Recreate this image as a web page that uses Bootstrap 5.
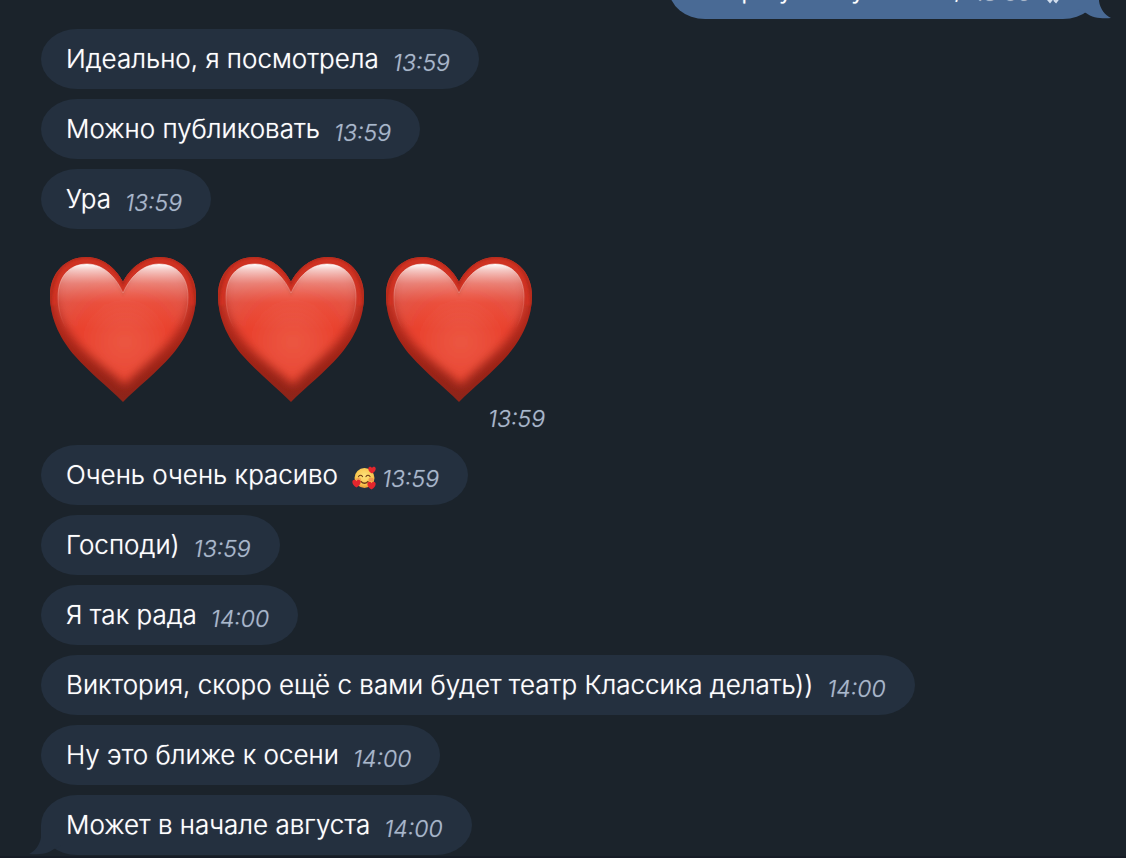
<!DOCTYPE html>
<html lang="ru">
<head>
<meta charset="utf-8">
<meta name="viewport" content="width=device-width, initial-scale=1">
<title>Чат</title>
<link href="https://cdn.jsdelivr.net/npm/bootstrap@5.3.0/dist/css/bootstrap.min.css" rel="stylesheet">
<style>
  :root { --chat-bg: #1b232b; --bubble-in: #24303f; --bubble-out: #496a95; --time: #a9b8cc; }
  body { background: var(--chat-bg); color: #fff; font-family: Inter, "Liberation Sans", sans-serif; }
  .chat { padding: 0 27px 1px 41px; border-bottom: 2px solid #161c26; }
  .feed { gap: 10px; }
  .bubble { height: 60px; padding: 0 29px 0 25px; gap: 14px; border-radius: 36px / 30px; background: var(--bubble-in); font-size: 26px; font-weight: 300; line-height: 60px; white-space: nowrap; text-shadow: 0 0 1px #ffffff99; }
  .bubble.out { padding-right: 33px; background: var(--bubble-out); }
  .stamp { color: var(--time); font-size: 23px; font-weight: 300; line-height: 32px; font-style: italic; text-shadow: 0 0 1px #a9b8cc99; }
  .bubble .stamp { padding-top: 7px; }
  .tail { position: absolute; bottom: 0; width: 34px; height: 30px; }
  .tail-in { left: -12px; fill: var(--bubble-in); }
  .tail-out { right: -12px; fill: var(--bubble-out); transform: scaleX(-1); }
  .hearts { padding: 18px 0 0 9px; }
  .heart-row { gap: 22px; padding-right: 13px; }
  .heart { width: 146px; height: 146px; }
  .face { width: 24px; height: 24px; margin-right: -8px; margin-top: 5px; }
  .ticks { width: 22px; height: 16px; margin-left: -2px; margin-top: 14px; fill: none; stroke: #d3dfee; stroke-width: 2; }
</style>
</head>
<body>
<svg width="0" height="0" class="position-absolute" aria-hidden="true">
  <defs>
    <symbol id="tail" viewBox="0 0 34 30"><path d="M12 0V12C11 20 6 26 0 29C8 30 19 29 25 24L34 20V0Z"/></symbol>
    <linearGradient id="rim" x1="0" y1="0" x2="0" y2="1">
      <stop offset="0" stop-color="#d03423"/><stop offset=".4" stop-color="#b0271a"/><stop offset=".75" stop-color="#9c2317"/><stop offset="1" stop-color="#8c2419"/>
    </linearGradient>
    <radialGradient id="core" gradientUnits="userSpaceOnUse" cx="75" cy="85" r="75">
      <stop offset="0" stop-color="#eb5641"/><stop offset=".35" stop-color="#ea4d39"/><stop offset=".6" stop-color="#ea412d"/><stop offset="1" stop-color="#e0493a"/>
    </radialGradient>
    <linearGradient id="shine" gradientUnits="userSpaceOnUse" x1="0" y1="7" x2="0" y2="72">
      <stop offset="0" stop-color="#fff"/><stop offset=".09" stop-color="#fff" stop-opacity=".72"/><stop offset=".3" stop-color="#f6d0cc" stop-opacity=".42"/><stop offset=".6" stop-color="#f0a8a0" stop-opacity=".13"/><stop offset="1" stop-color="#f0a8a0" stop-opacity="0"/>
    </linearGradient>
    <linearGradient id="edge" gradientUnits="userSpaceOnUse" x1="0" y1="8" x2="0" y2="72">
      <stop offset="0" stop-color="#fff" stop-opacity=".5"/><stop offset=".5" stop-color="#f5a59c" stop-opacity=".35"/><stop offset="1" stop-color="#f5a59c" stop-opacity="0"/>
    </linearGradient>
    <filter id="soft" x="-20%" y="-20%" width="140%" height="140%"><feGaussianBlur stdDeviation="5"/></filter>
    <filter id="softer"><feGaussianBlur stdDeviation="1"/></filter>
    <clipPath id="heart-clip"><path d="M73 25C65 10 52 0 36 0C16 0 0 16 0 38C0 64 12 84 25 99C39 115 58 130 73 145C88 130 107 115 121 99C134 84 146 64 146 38C146 16 130 0 110 0C94 0 81 10 73 25Z"/></clipPath>
    <symbol id="heart" viewBox="0 0 146 146">
      <g clip-path="url(#heart-clip)">
        <path fill="url(#rim)" d="M0 0H146V146H0Z"/>
        <path fill="url(#core)" filter="url(#soft)" d="M73 30C65 16 52 8 37 8C19 8 7 22 7 40C8 62 21 80 34 93C47 106 62 116 75 128C86 116 99 106 112 93C125 80 138 62 139 40C139 22 127 8 109 8C94 8 81 16 73 30Z"/>
        <path fill="none" stroke="#cf3323" stroke-width="7" filter="url(#softer)" d="M4 48C1 20 15 4 36 4C52 4 66 14 73 30C80 14 94 4 110 4C131 4 145 20 142 48"/>
        <path fill="none" stroke="#a9261a" stroke-width="2" filter="url(#softer)" d="M1 60C-2 20 12 0 36 0C52 0 66 10 73 26C80 10 94 0 110 0C134 0 148 20 145 60"/>
        <path fill="url(#shine)" stroke="url(#edge)" d="M73 36C65 18 52 7 37 7C19 7 8 20 8 40C8 57 14 70 22 80H124C132 70 138 57 138 40C138 20 127 7 109 7C94 7 81 18 73 36Z"/>
      </g>
    </symbol>
    <symbol id="mini-heart" viewBox="0 0 8 8"><path fill="#e3262d" d="M4 7.600C1.500 6 .2 4.500 .3 2.500C.4 .5 3 0 4 2C5 0 7.600 .5 7.700 2.500C7.800 4.500 6.500 6 4 7.600Z"/></symbol>
    <radialGradient id="skin" cx=".5" cy=".4" r=".6"><stop offset="0" stop-color="#fde27c"/><stop offset=".7" stop-color="#f8c850"/><stop offset="1" stop-color="#e69a35"/></radialGradient>
  </defs>
</svg>
<main class="chat vh-100 overflow-hidden d-flex flex-column justify-content-end">
  <ol class="feed list-unstyled mb-0 d-flex flex-column align-items-start">
    <li class="bubble out d-flex align-items-center position-relative align-self-end">
      <svg class="tail tail-out" aria-hidden="true"><use href="#tail"/></svg>
      <span>Вчера у вас условия,</span><time class="stamp">13:59</time>
      <svg class="ticks" viewBox="0 0 22 16" role="img" aria-label="Прочитано"><path d="M1 8L6 14L15 2M10 12L12 14L21 2"/></svg>
    </li>
    <li class="bubble d-flex align-items-center"><span>Идеально, я посмотрела</span><time class="stamp">13:59</time></li>
    <li class="bubble d-flex align-items-center"><span>Можно публиковать</span><time class="stamp">13:59</time></li>
    <li class="bubble d-flex align-items-center"><span>Ура</span><time class="stamp">13:59</time></li>
    <li class="hearts d-flex flex-column align-items-end">
      <div class="heart-row d-flex" role="img" aria-label="Три красных сердца">
        <svg class="heart"><use href="#heart"/></svg>
        <svg class="heart"><use href="#heart"/></svg>
        <svg class="heart"><use href="#heart"/></svg>
      </div>
      <time class="stamp">13:59</time>
    </li>
    <li class="bubble d-flex align-items-center">
      <span>Очень очень красиво</span>
      <svg class="face" viewBox="0 0 24 24" role="img" aria-label="Влюблённая улыбка">
        <circle cx="12.500" cy="12" r="10" fill="url(#skin)"/>
        <ellipse cx="6.500" cy="13.500" rx="2.500" ry="2" fill="#f0844a" opacity=".6"/><ellipse cx="19" cy="13.500" rx="2.500" ry="2" fill="#f0844a" opacity=".7"/>
        <path fill="none" stroke="#6b3a16" stroke-width="1.200" stroke-linecap="round" d="M6.500 10.500Q8.500 8 10.500 10.500M14 10.500Q16 8 18 10.500M9 15.500Q12.500 19 16 15.500"/>
        <use href="#mini-heart" x="16" y="0" width="8" height="8"/><use href="#mini-heart" x="0" y="13" width="9" height="9"/><use href="#mini-heart" x="15" y="15" width="9" height="9"/>
      </svg>
      <time class="stamp">13:59</time>
    </li>
    <li class="bubble d-flex align-items-center"><span>Господи)</span><time class="stamp">13:59</time></li>
    <li class="bubble d-flex align-items-center"><span>Я так рада</span><time class="stamp">14:00</time></li>
    <li class="bubble d-flex align-items-center"><span>Виктория, скоро ещё с вами будет театр Классика делать))</span><time class="stamp">14:00</time></li>
    <li class="bubble d-flex align-items-center"><span>Ну это ближе к осени</span><time class="stamp">14:00</time></li>
    <li class="bubble d-flex align-items-center position-relative"><svg class="tail tail-in" aria-hidden="true"><use href="#tail"/></svg><span>Может в начале августа</span><time class="stamp">14:00</time></li>
  </ol>
</main>
<script src="https://cdn.jsdelivr.net/npm/bootstrap@5.3.0/dist/js/bootstrap.bundle.min.js"></script>
</body>
</html>
